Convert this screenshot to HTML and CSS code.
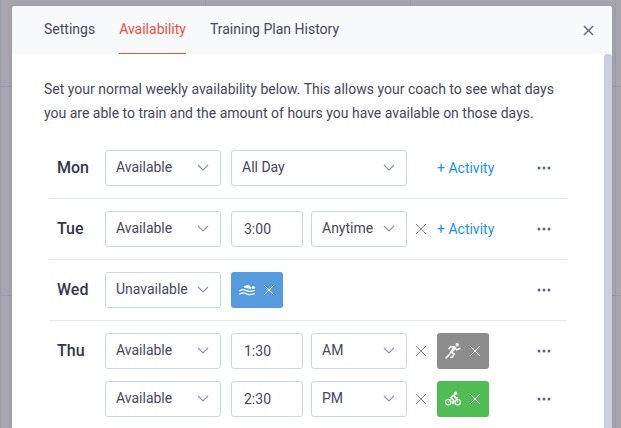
FILE: index.html
```html
<!DOCTYPE html>
<html lang="en">
<head>
<meta charset="utf-8">
<title>Availability</title>
<link rel="stylesheet" href="styles.css">
</head>
<body>
<svg class="sprite" aria-hidden="true">
  <symbol id="chevron" viewBox="0 0 12 8"><path d="M1 1l5 5 5-5" fill="none" stroke="currentColor" stroke-width="1.200"/></symbol>
  <symbol id="cross" viewBox="0 0 12 12"><path d="M1 1l10 10M11 1L1 11" fill="none" stroke="currentColor"/></symbol>
  <symbol id="dots" viewBox="0 0 14 4"><g fill="currentColor"><circle cx="2" cy="2" r="1.500"/><circle cx="7" cy="2" r="1.500"/><circle cx="12" cy="2" r="1.500"/></g></symbol>
  <symbol id="swim" viewBox="0 0 16 16">
    <circle cx="14.300" cy="5.500" r="1.600" fill="currentColor"/>
    <path d="M4.400 4.200L9.600 2.800l3 3.200-1 .9L5.600 5.800z" fill="currentColor"/>
    <path d="M.3 8.900C3 7.200 4.400 7 6.400 8.200s4.600 2 9.400.2M.3 12.200c2.700-1.600 4.400-1.800 6.400-.6s4.500 1.800 8.900 0" fill="none" stroke="currentColor" stroke-width="1.200"/>
  </symbol>
  <symbol id="run" viewBox="0 0 16 16">
    <circle cx="12.200" cy="1.800" r="1.700" fill="currentColor"/>
    <path d="M3.600 6.200L5.600 3.400l3.800.3 2.200 3.200 3.800-1.700M9.400 4L5.800 9.200l3.400 1.800-1.800 3.200H5.200M5.600 9.400l-1.200 2.200L.6 15.400" fill="none" stroke="currentColor" stroke-width="1.500" stroke-linejoin="round"/>
    <path d="M8.400 3.600l2 2.200-3 4-1.600-.8z" fill="currentColor"/>
  </symbol>
  <symbol id="bike" viewBox="0 0 16 16">
    <circle cx="10.600" cy="2.400" r="1.800" fill="currentColor"/>
    <g fill="none" stroke="currentColor"><circle cx="3.300" cy="11.200" r="2.700" stroke-width="1.100"/><circle cx="12.700" cy="11.200" r="2.700" stroke-width="1.100"/>
    <path d="M3.300 11.200L6 8.600M12.700 11.200L11 7.400" stroke-width="1"/>
    <path d="M8.800 3.800L5.800 6.800l2.800 2.400-.8 4M8.600 4.400l1.800 2.200 2.400.2" stroke-width="1.700"/></g>
  </symbol>
</svg>
<main class="modal">
  <header class="modal-header">
    <nav class="tabs">
      <a class="tab" href="#settings">Settings</a>
      <a class="tab active" href="#availability" aria-current="page">Availability</a>
      <a class="tab" href="#history">Training Plan History</a>
    </nav>
    <button class="close" aria-label="Close"><svg><use href="#cross"/></svg></button>
  </header>
  <div class="modal-body">
    <div class="content">
      <p class="intro">Set your normal weekly availability below. This allows your coach to see what days you are able to train and the amount of hours you have available on those days.</p>
      <div class="days">
        <section class="day">
          <h2>Mon</h2>
          <div class="slots">
            <div class="slot">
              <div class="select status"><select aria-label="Monday status"><option>Available</option><option>Unavailable</option></select><svg><use href="#chevron"/></svg></div>
              <div class="hours"><div class="select"><select aria-label="Monday hours"><option>All Day</option></select><svg><use href="#chevron"/></svg></div></div>
              <span class="remove"></span>
              <button class="add">+ Activity</button>
              <button class="more" aria-label="More"><svg><use href="#dots"/></svg></button>
            </div>
          </div>
        </section>
        <section class="day">
          <h2>Tue</h2>
          <div class="slots">
            <div class="slot">
              <div class="select status"><select aria-label="Tuesday status"><option>Available</option><option>Unavailable</option></select><svg><use href="#chevron"/></svg></div>
              <div class="hours"><input class="time" aria-label="Tuesday duration" value="3:00"><div class="select"><select aria-label="Tuesday time of day"><option>Anytime</option><option>AM</option><option>PM</option></select><svg><use href="#chevron"/></svg></div></div>
              <button class="remove" aria-label="Remove hours"><svg><use href="#cross"/></svg></button>
              <button class="add">+ Activity</button>
              <button class="more" aria-label="More"><svg><use href="#dots"/></svg></button>
            </div>
          </div>
        </section>
        <section class="day">
          <h2>Wed</h2>
          <div class="slots">
            <div class="slot">
              <div class="select status"><select aria-label="Wednesday status"><option>Unavailable</option><option>Available</option></select><svg><use href="#chevron"/></svg></div>
              <button class="activity swim" aria-label="Remove swim"><svg class="sport"><use href="#swim"/></svg><svg class="x"><use href="#cross"/></svg></button>
              <button class="more" aria-label="More"><svg><use href="#dots"/></svg></button>
            </div>
          </div>
        </section>
        <section class="day">
          <h2>Thu</h2>
          <div class="slots">
            <div class="slot">
              <div class="select status"><select aria-label="Thursday morning status"><option>Available</option><option>Unavailable</option></select><svg><use href="#chevron"/></svg></div>
              <div class="hours"><input class="time" aria-label="Thursday morning duration" value="1:30"><div class="select"><select aria-label="Thursday morning time of day"><option>AM</option><option>PM</option><option>Anytime</option></select><svg><use href="#chevron"/></svg></div></div>
              <button class="remove" aria-label="Remove hours"><svg><use href="#cross"/></svg></button>
              <button class="activity run" aria-label="Remove run"><svg class="sport"><use href="#run"/></svg><svg class="x"><use href="#cross"/></svg></button>
              <button class="more" aria-label="More"><svg><use href="#dots"/></svg></button>
            </div>
            <div class="slot">
              <div class="select status"><select aria-label="Thursday afternoon status"><option>Available</option><option>Unavailable</option></select><svg><use href="#chevron"/></svg></div>
              <div class="hours"><input class="time" aria-label="Thursday afternoon duration" value="2:30"><div class="select"><select aria-label="Thursday afternoon time of day"><option>PM</option><option>AM</option><option>Anytime</option></select><svg><use href="#chevron"/></svg></div></div>
              <button class="remove" aria-label="Remove hours"><svg><use href="#cross"/></svg></button>
              <button class="activity bike" aria-label="Remove bike"><svg class="sport"><use href="#bike"/></svg><svg class="x"><use href="#cross"/></svg></button>
              <button class="more" aria-label="More"><svg><use href="#dots"/></svg></button>
            </div>
          </div>
        </section>
      </div>
    </div>
    <div class="scrollbar"></div>
  </div>
</main>
</body>
</html>
```
FILE: styles.css
```css
* { box-sizing: border-box; }

body {
  margin: 0;
  height: 100vh;
  overflow: hidden;
  display: flex;
  padding: 6px 9px 0 12px;
  font: 14px/24px Roboto, sans-serif;
  color: #47475a;
  background-color: #a7a6b0;
  background-image:
    linear-gradient(90deg, #9c9ba9 1px, transparent 1px),
    linear-gradient(#9c9ba9 1px, transparent 1px);
  background-size: 205px 209px;
  background-position: 0 86px;
}

svg { display: block; }
.sprite { position: absolute; width: 0; height: 0; }

button, input, select { font: inherit; color: inherit; margin: 0; }
button { padding: 0; border: 0; background: none; display: flex; align-items: center; justify-content: center; cursor: pointer; }

.modal {
  flex: 1;
  min-width: 0;
  display: flex;
  flex-direction: column;
  background: #fff;
  border-radius: 3px 3px 0 0;
  box-shadow: 0 0 4px rgba(60, 58, 80, 0.2);
}

.modal-header {
  flex: none;
  height: 48px;
  display: flex;
  justify-content: space-between;
  padding: 0 16px 0 32px;
  background: #f8f9fb;
  border-radius: 3px 3px 0 0;
}

.tabs { display: flex; gap: 24px; }
.tab { display: flex; align-items: center; padding-bottom: 2px; color: inherit; text-decoration: none; border-bottom: 1px solid transparent; }
.tab.active { color: #f04e3e; border-color: #e8503f; }

.close { width: 16px; color: #5d6b7c; }
.close svg { width: 11px; height: 11px; stroke-width: 1.5; }

.modal-body { flex: 1; min-height: 0; display: flex; }
.content { flex: 1; min-width: 0; padding: 23px 32px 0; overflow: hidden; }
.scrollbar { width: 8px; background: #cccddd; border-radius: 3px 3px 0 0; }

.intro { margin: 0; }
.days { margin: 13px 5px 0; }

.day { display: flex; padding: 12px 0 12px 8px; border-bottom: 1px solid #e4e8f0; }
.day h2 { flex: none; width: 48px; margin: 0; font-size: 16px; line-height: 36px; font-weight: 500; color: #36364a; }
.slots { flex: 1; display: flex; flex-direction: column; gap: 12px; }
.slot { display: flex; height: 36px; }

.select { position: relative; flex: 1; }
.status { flex: none; width: 116px; margin-right: 10px; }
.select select, .time {
  width: 100%;
  height: 36px;
  border: 1px solid #c9d9e3;
  border-radius: 3px;
  background: #fff;
  outline: none;
}
.select select { appearance: none; padding: 0 28px 2px 10px; }
.select svg { position: absolute; right: 12px; top: 14px; width: 12px; height: 8px; color: #8c96a5; pointer-events: none; }

.hours { flex: none; width: 176px; display: flex; gap: 8px; }
.time { flex: none; width: 72px; padding: 0 12px; }

.remove { flex: none; width: 28px; margin-right: 2px; color: #8c8f9f; }
.remove svg, .activity .x { width: 12px; height: 12px; }
.add { color: #1694f6; }

.activity { width: 52px; border-radius: 3px; color: #fff; gap: 8px; }
.sport { width: 16px; height: 16px; }
.swim { background: #569bde; }
.run { background: #8c8c8c; }
.bike { background: #4fbd53; }

.more { width: 47px; margin-left: auto; color: #5b677a; }
.more svg { width: 14px; height: 4px; }
```
